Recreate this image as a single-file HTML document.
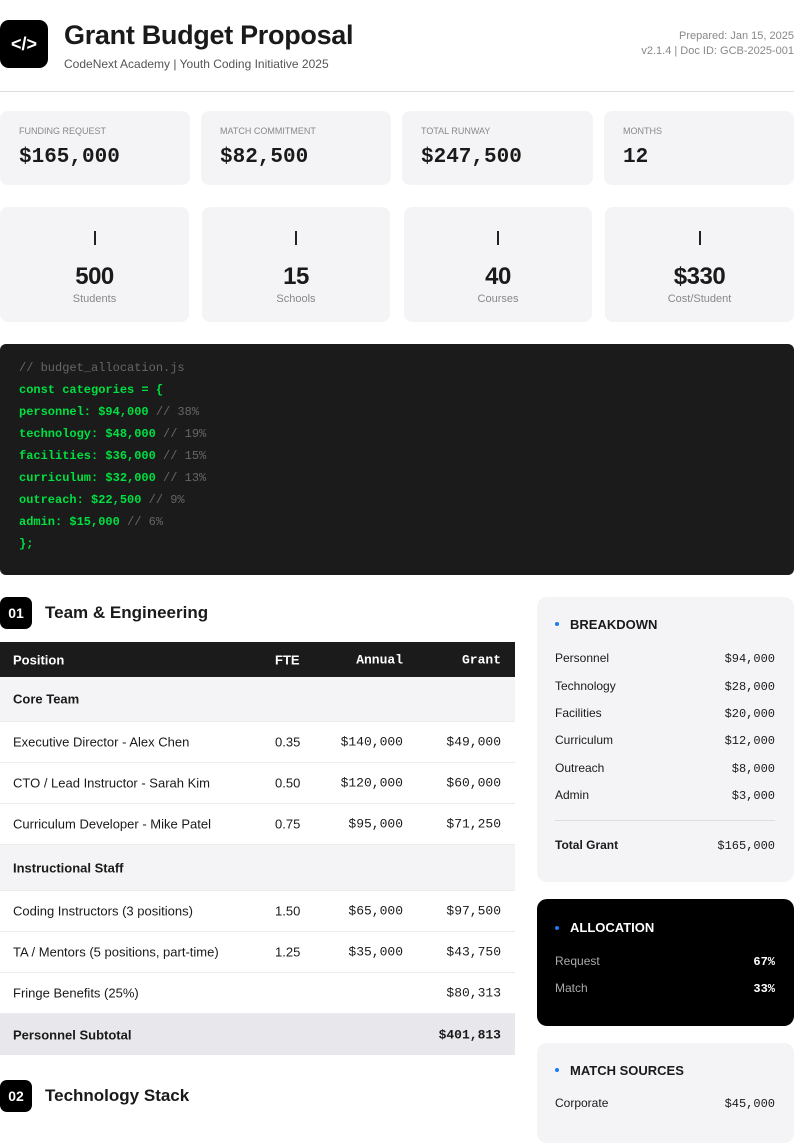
<!DOCTYPE html>
<html><head><meta charset="utf-8"><style>
*{margin:0;padding:0;box-sizing:border-box}
body{width:794px;height:1123px;overflow:hidden;background:#fff;font-family:"Liberation Sans",Arial,sans-serif;color:#1a1a1a;position:relative}
.a{position:absolute}
.card{position:absolute;background:#f4f4f6;border-radius:8px}
.lbl{position:absolute;left:19px;top:15px;font-size:9px;color:#888;text-transform:uppercase}
.val{position:absolute;left:19px;top:35px;font-size:21px;font-weight:bold;font-family:"Liberation Mono",monospace}
.c2{position:absolute;background:#f4f4f6;border-radius:8px;text-align:center}
.c2 .bar{position:absolute;left:50%;top:24px;width:2px;height:14px;background:#222;margin-left:-1px}
.c2 .n{position:absolute;width:100%;top:56px;font-size:24px;font-weight:bold;letter-spacing:-0.5px}
.c2 .t{position:absolute;width:100%;top:86px;font-size:11px;color:#888}
.code{left:0;top:344px;width:794px;height:231px;background:#1b1b1b;border-radius:6px}
.code div{position:absolute;left:19px;font-family:"Liberation Mono",monospace;font-size:12px;font-weight:bold;color:#00e040}
.code span{color:#666;font-weight:normal}
.badge{position:absolute;left:0;width:32px;height:32px;background:#000;color:#fff;border-radius:7px;font-size:14px;font-weight:bold;text-align:center;line-height:32px}
.sec{position:absolute;left:45px;font-size:17px;font-weight:bold}
.row{position:absolute;left:0;width:515px;border-bottom:1px solid #ececec;font-size:13px}
.row div{position:absolute;top:50%;transform:translateY(-50%)}
.p{left:13px}.f{left:275px}.an{right:112px;font-family:"Liberation Mono",monospace}.g{right:14px;font-family:"Liberation Mono",monospace}
.side{position:absolute;left:537px;width:257px;border-radius:10px;background:#f4f4f6}
.side .h{position:absolute;left:33px;font-size:13px;font-weight:bold}
.side .dot{position:absolute;left:18px;width:4px;height:4px;border-radius:2px;background:#1a7cf0}
.side .k{position:absolute;left:18px;font-size:12px}
.side .v{position:absolute;right:19px;font-size:12px;font-family:"Liberation Mono",monospace}
</style></head><body>
<div class="a" style="left:0;top:20px;width:48px;height:48px;background:#000;border-radius:9px;color:#fff;font-weight:bold;font-size:18px;text-align:center;line-height:48px">&lt;/&gt;</div>
<div class="a" style="left:64px;top:20px;font-size:27px;font-weight:bold;letter-spacing:-0.3px">Grant Budget Proposal</div>
<div class="a" style="left:64px;top:57px;font-size:12px;color:#555">CodeNext Academy | Youth Coding Initiative 2025</div>
<div class="a" style="right:0;top:29px;font-size:11px;color:#888;text-align:right;line-height:15px">Prepared: Jan 15, 2025<br>v2.1.4 | Doc ID: GCB-2025-001</div>
<div class="a" style="left:0;top:91px;width:794px;height:1px;background:#ddd"></div>

<div class="card" style="left:0;top:111px;width:190px;height:74px"><div class="lbl">Funding Request</div><div class="val">$165,000</div></div>
<div class="card" style="left:201px;top:111px;width:190px;height:74px"><div class="lbl">Match Commitment</div><div class="val">$82,500</div></div>
<div class="card" style="left:402px;top:111px;width:191px;height:74px"><div class="lbl">Total Runway</div><div class="val">$247,500</div></div>
<div class="card" style="left:604px;top:111px;width:190px;height:74px"><div class="lbl">Months</div><div class="val">12</div></div>

<div class="c2" style="left:0;top:207px;width:189px;height:115px"><div class="bar"></div><div class="n">500</div><div class="t">Students</div></div>
<div class="c2" style="left:202px;top:207px;width:188px;height:115px"><div class="bar"></div><div class="n">15</div><div class="t">Schools</div></div>
<div class="c2" style="left:404px;top:207px;width:188px;height:115px"><div class="bar"></div><div class="n">40</div><div class="t">Courses</div></div>
<div class="c2" style="left:605px;top:207px;width:189px;height:115px"><div class="bar"></div><div class="n">$330</div><div class="t">Cost/Student</div></div>

<div class="a code">
<div style="top:17px"><span>// budget_allocation.js</span></div>
<div style="top:39px">const categories = {</div>
<div style="top:61px">personnel: $94,000 <span>// 38%</span></div>
<div style="top:83px">technology: $48,000 <span>// 19%</span></div>
<div style="top:105px">facilities: $36,000 <span>// 15%</span></div>
<div style="top:127px">curriculum: $32,000 <span>// 13%</span></div>
<div style="top:149px">outreach: $22,500 <span>// 9%</span></div>
<div style="top:171px">admin: $15,000 <span>// 6%</span></div>
<div style="top:193px">};</div>
</div>

<div class="badge" style="top:597px">01</div>
<div class="sec" style="top:603px">Team &amp; Engineering</div>

<div class="row" style="top:642px;height:35px;background:#1b1b1b;color:#fff;font-weight:bold;border:none"><div class="p">Position</div><div class="f">FTE</div><div class="an">Annual</div><div class="g">Grant</div></div>
<div class="row" style="top:677px;height:45px;background:#f4f4f6;font-weight:bold"><div class="p">Core Team</div></div>
<div class="row" style="top:722px;height:41px"><div class="p">Executive Director - Alex Chen</div><div class="f">0.35</div><div class="an">$140,000</div><div class="g">$49,000</div></div>
<div class="row" style="top:763px;height:41px"><div class="p">CTO / Lead Instructor - Sarah Kim</div><div class="f">0.50</div><div class="an">$120,000</div><div class="g">$60,000</div></div>
<div class="row" style="top:804px;height:41px"><div class="p">Curriculum Developer - Mike Patel</div><div class="f">0.75</div><div class="an">$95,000</div><div class="g">$71,250</div></div>
<div class="row" style="top:845px;height:46px;background:#f4f4f6;font-weight:bold"><div class="p">Instructional Staff</div></div>
<div class="row" style="top:891px;height:41px"><div class="p">Coding Instructors (3 positions)</div><div class="f">1.50</div><div class="an">$65,000</div><div class="g">$97,500</div></div>
<div class="row" style="top:932px;height:41px"><div class="p">TA / Mentors (5 positions, part-time)</div><div class="f">1.25</div><div class="an">$35,000</div><div class="g">$43,750</div></div>
<div class="row" style="top:973px;height:41px"><div class="p">Fringe Benefits (25%)</div><div class="g">$80,313</div></div>
<div class="row" style="top:1014px;height:41px;background:#e8e8ec;font-weight:bold;border:none"><div class="p">Personnel Subtotal</div><div class="g">$401,813</div></div>

<div class="badge" style="top:1080px">02</div>
<div class="sec" style="top:1086px">Technology Stack</div>

<div class="side" style="top:597px;height:285px">
<div class="dot" style="top:25px"></div><div class="h" style="top:20px">BREAKDOWN</div>
<div class="k" style="top:54px">Personnel</div><div class="v" style="top:55px">$94,000</div>
<div class="k" style="top:82px">Technology</div><div class="v" style="top:83px">$28,000</div>
<div class="k" style="top:109px">Facilities</div><div class="v" style="top:110px">$20,000</div>
<div class="k" style="top:136px">Curriculum</div><div class="v" style="top:137px">$12,000</div>
<div class="k" style="top:164px">Outreach</div><div class="v" style="top:165px">$8,000</div>
<div class="k" style="top:191px">Admin</div><div class="v" style="top:192px">$3,000</div>
<div class="a" style="left:18px;right:19px;top:223px;height:1px;background:#ddd"></div>
<div class="k" style="top:241px;font-weight:bold">Total Grant</div><div class="v" style="top:242px">$165,000</div>
</div>

<div class="side" style="top:899px;height:127px;background:#000;color:#fff">
<div class="dot" style="top:27px"></div><div class="h" style="top:21px;color:#fff">ALLOCATION</div>
<div class="k" style="top:55px;color:#aaa">Request</div><div class="v" style="top:56px;font-weight:bold">67%</div>
<div class="k" style="top:82px;color:#aaa">Match</div><div class="v" style="top:83px;font-weight:bold">33%</div>
</div>

<div class="side" style="top:1043px;height:100px">
<div class="dot" style="top:25px"></div><div class="h" style="top:20px">MATCH SOURCES</div>
<div class="k" style="top:53px">Corporate</div><div class="v" style="top:54px">$45,000</div>
</div>
</body></html>
